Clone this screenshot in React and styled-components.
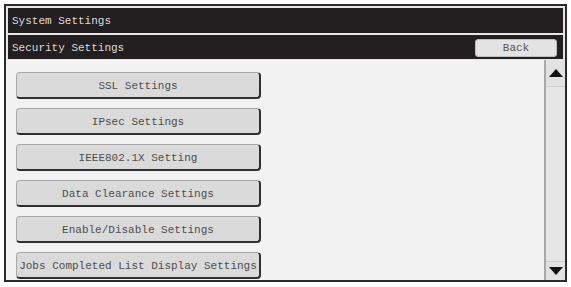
import React from 'react'
import styled, { createGlobalStyle } from 'styled-components'

const GlobalStyle = createGlobalStyle`
  html, body {
    margin: 0;
    padding: 0;
    background: #ffffff;
  }
  body {
    font-family: "Liberation Mono", "Courier New", monospace;
  }
`

const Page = styled.div`
  padding: 4px 0 0 4px;
`

const Frame = styled.div`
  width: 559px;
  height: 274px;
  border: 2px solid #2b2b2b;
  display: flex;
  flex-direction: column;
  background: #e9e9e9;
`

const Header = styled.div`
  display: flex;
  flex-direction: column;
  gap: 2px;
  padding: 2px 2px 1px;
  background: #e6e6e6;
`

const Bar = styled.div`
  height: ${p => p.h}px;
  background: #231f20;
  color: #dcdcdc;
  font-size: 11px;
  display: flex;
  align-items: center;
  justify-content: space-between;
  padding: 1px 5px 0 4px;
  box-sizing: border-box;
`

const BackButton = styled.button`
  width: 82px;
  height: 18px;
  margin-right: 1px;
  border: 1px solid #bdbdbd;
  border-radius: 3px;
  background: #e3e3e3;
  color: #555;
  font-family: "Liberation Mono", "Courier New", monospace;
  font-size: 11px;
  padding: 0;
`

const Content = styled.div`
  flex: 1;
  display: flex;
  background: #f2f2f2;
  overflow: hidden;
`

const List = styled.div`
  flex: 1;
  display: flex;
  flex-direction: column;
  gap: 9px;
  padding: 12px 0 0 10px;
`

const MenuButton = styled.button`
  width: 245px;
  height: 27px;
  box-sizing: border-box;
  border: 1px solid #a9a9a9;
  border-right: 2px solid #303030;
  border-bottom: 2px solid #303030;
  border-radius: 4px;
  background: #dadada;
  color: #4d4d4d;
  font-family: "Liberation Mono", "Courier New", monospace;
  font-size: 11px;
  padding: 1px 0 0;
  white-space: nowrap;
`

const Scroll = styled.div`
  width: 19px;
  display: flex;
  flex-direction: column;
  border-left: 2px solid #a8a8a8;
  background: #e2e2e2;
`

const ArrowBox = styled.div`
  height: ${p => p.h}px;
  display: flex;
  align-items: center;
  justify-content: center;
  border-top: ${p => (p.bottom ? '1px solid #cdcdcd' : 'none')};
  border-bottom: ${p => (p.bottom ? 'none' : '1px solid #cdcdcd')};
`

const Track = styled.div`
  flex: 1;
  background: #e6e6e6;
`

const Arrow = ({ down }) => (
  <svg width="14" height="8" viewBox="0 0 14 8">
    <polygon
      points={down ? '0,0 14,0 7,8' : '0,8 14,8 7,0'}
      fill="#111"
    />
  </svg>
)

const items = [
  'SSL Settings',
  'IPsec Settings',
  'IEEE802.1X Setting',
  'Data Clearance Settings',
  'Enable/Disable Settings',
  'Jobs Completed List Display Settings',
]

export default function App() {
  return (
    <Page>
      <GlobalStyle />
      <Frame>
        <Header>
          <Bar h={25}>System Settings</Bar>
          <Bar h={24}>
            Security Settings
            <BackButton>Back</BackButton>
          </Bar>
        </Header>
        <Content>
          <List>
            {items.map(item => (
              <MenuButton key={item}>{item}</MenuButton>
            ))}
          </List>
          <Scroll>
            <ArrowBox h={26}>
              <Arrow />
            </ArrowBox>
            <Track />
            <ArrowBox h={18} bottom>
              <Arrow down />
            </ArrowBox>
          </Scroll>
        </Content>
      </Frame>
    </Page>
  )
}
